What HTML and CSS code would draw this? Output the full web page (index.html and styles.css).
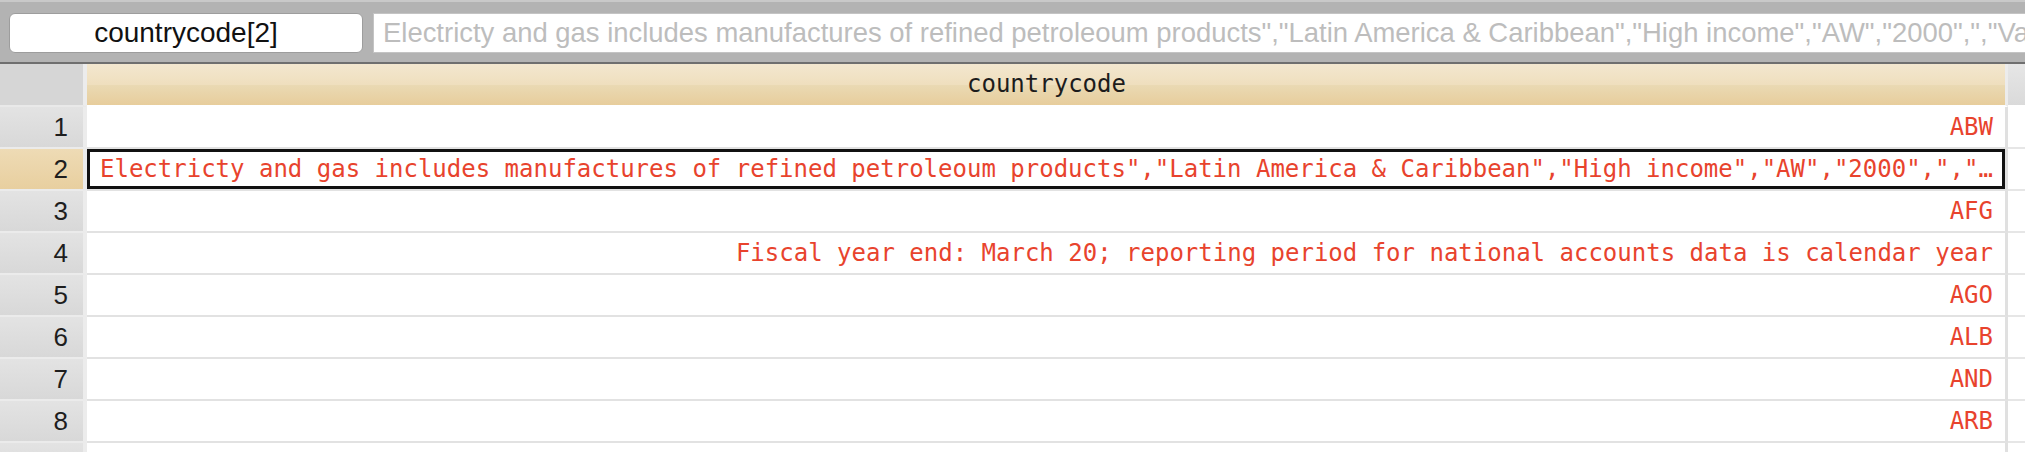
FILE: index.html
```html
<!DOCTYPE html>
<html>
<head>
<meta charset="utf-8">
<link rel="stylesheet" href="styles.css">
</head>
<body>
<div class="toolbar">
  <div class="namebox">countrycode[2]</div>
  <div class="formula">Electricty and gas includes manufactures of refined petroleoum products","Latin America &amp; Caribbean","High income","AW","2000",","Value added in industry includes</div>
</div>
<div class="grid">
  <div class="row head">
    <div class="rn"></div>
    <div class="cell">countrycode</div>
    <div class="rest"></div>
  </div>
  <div class="row">
    <div class="rn">1</div>
    <div class="cell">ABW</div>
    <div class="rest"></div>
  </div>
  <div class="row sel">
    <div class="rn">2</div>
    <div class="cell left">Electricty and gas includes manufactures of refined petroleoum products","Latin America &amp; Caribbean","High income","AW","2000",","…</div>
    <div class="rest"></div>
  </div>
  <div class="row">
    <div class="rn">3</div>
    <div class="cell">AFG</div>
    <div class="rest"></div>
  </div>
  <div class="row">
    <div class="rn">4</div>
    <div class="cell">Fiscal year end: March 20; reporting period for national accounts data is calendar year</div>
    <div class="rest"></div>
  </div>
  <div class="row">
    <div class="rn">5</div>
    <div class="cell">AGO</div>
    <div class="rest"></div>
  </div>
  <div class="row">
    <div class="rn">6</div>
    <div class="cell">ALB</div>
    <div class="rest"></div>
  </div>
  <div class="row">
    <div class="rn">7</div>
    <div class="cell">AND</div>
    <div class="rest"></div>
  </div>
  <div class="row">
    <div class="rn">8</div>
    <div class="cell">ARB</div>
    <div class="rest"></div>
  </div>
  <div class="row">
    <div class="rn"></div>
    <div class="cell"></div>
    <div class="rest"></div>
  </div>
</div>
</body>
</html>
```
FILE: styles.css
```css
html, body {
  margin: 0;
  padding: 0;
  background: #ffffff;
  overflow: hidden;
  height: 452px;
}

.toolbar {
  height: 49px;
  background: #b3b3b3;
  border-top: 2px solid #c9c9c9;
  border-bottom: 2px solid #6f6f6f;
  padding: 11px 0 0 9px;
  display: flex;
  gap: 10px;
  overflow: hidden;
}

.namebox {
  flex: 0 0 auto;
  width: 352px;
  height: 38px;
  background: #ffffff;
  border: 1px solid #9d9d9d;
  border-radius: 6px;
  font-family: "Liberation Sans", Arial, sans-serif;
  font-size: 28px;
  line-height: 38px;
  text-align: center;
  color: #111111;
}

.formula {
  flex: 1 1 auto;
  min-width: 0;
  height: 38px;
  background: #ffffff;
  border: 1px solid #c4c4c4;
  border-right: none;
  padding-left: 9px;
  font-family: "Liberation Sans", Arial, sans-serif;
  font-size: 27.45px;
  line-height: 38px;
  color: #bdbdbd;
  white-space: nowrap;
  overflow: hidden;
}

.grid {
  display: flex;
  flex-direction: column;
  height: 388px;
  overflow: hidden;
}

.row {
  display: flex;
  flex: 0 0 auto;
  height: 42px;
}

.rn {
  flex: 0 0 auto;
  width: 68px;
  height: 40px;
  padding-right: 15px;
  border-right: 4px solid #ececec;
  border-bottom: 2px solid #ebebeb;
  background: linear-gradient(#e3e3e3, #d8d8d8);
  font-family: "Liberation Sans", Arial, sans-serif;
  font-size: 26px;
  line-height: 40px;
  text-align: right;
  color: #1e1e1e;
}

.cell {
  flex: 0 0 auto;
  width: 1893px;
  height: 40px;
  padding: 0 12px 0 13px;
  border-bottom: 2px solid #e2e2e2;
  border-right: 3px solid #e0e0e0;
  font-family: "DejaVu Sans Mono", Menlo, monospace;
  font-size: 24px;
  line-height: 40px;
  text-align: right;
  color: #e8432d;
  white-space: nowrap;
  overflow: hidden;
}

.cell.left {
  text-align: left;
}

.rest {
  flex: 1 1 auto;
  height: 40px;
  border-bottom: 2px solid #e6e6e6;
}

.head {
  height: 43px;
}

.head .rn {
  height: 41px;
  border-bottom: 2px solid #e9e9e9;
  background: linear-gradient(#d6d6d6, #d6d6d6);
}

.head .cell {
  height: 41px;
  line-height: 41px;
  text-align: center;
  color: #1c1c1c;
  background: linear-gradient(#f3e7cf, #efdfbe 50%, #eadab4 50%, #e7cd9c);
  border-bottom: 2px solid #ffffff;
  border-right-color: #ececec;
}

.head .rest {
  height: 41px;
  background: linear-gradient(#e6e6e6, #dadada);
  border-bottom: 2px solid #ffffff;
}

.sel .rn {
  background: linear-gradient(#eedbb5, #e8cf9f);
}

.sel .cell {
  box-shadow: inset 0 0 0 3px #111111;
  border-bottom-color: #e2e2e2;
}
```
